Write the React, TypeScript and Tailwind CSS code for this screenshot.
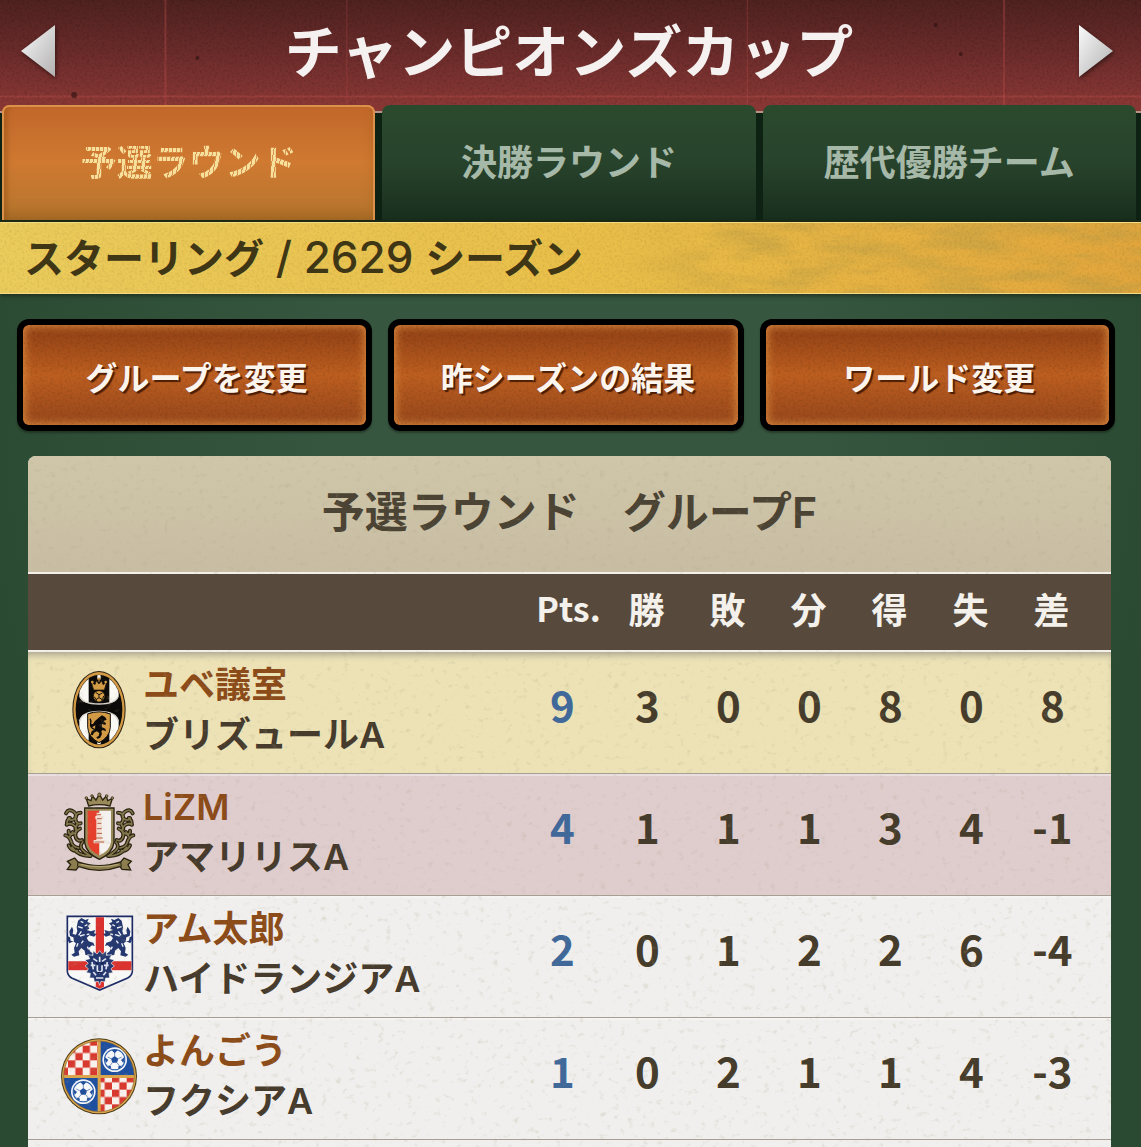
import type { ReactNode } from 'react'

const tabs = [
  { id: 'qualifying', label: '予選ラウンド' },
  { id: 'final', label: '決勝ラウンド' },
  { id: 'history', label: '歴代優勝チーム' },
]

const actions = ['グループを変更', '昨シーズンの結果', 'ワールド変更']

const columns = ['勝', '敗', '分', '得', '失', '差']

const teams = [
  { owner: 'ユベ議室', club: 'ブリズュールA', pts: 9, stats: [3, 0, 0, 8, 0, 8], bg: 'bg-[#ece2b6]', crest: <JuveCrest /> },
  { owner: 'LiZM', club: 'アマリリスA', pts: 4, stats: [1, 1, 1, 3, 4, -1], bg: 'bg-[#dfcdce]', crest: <TowerCrest /> },
  { owner: 'アム太郎', club: 'ハイドランジアA', pts: 2, stats: [0, 1, 2, 2, 6, -4], bg: 'bg-[#f0efed]', crest: <LionsCrest /> },
  { owner: 'よんごう', club: 'フクシアA', pts: 1, stats: [0, 2, 1, 1, 4, -3], bg: 'bg-[#f0efed]', crest: <CheckerCrest /> },
]

function Crest({ children }: { children: ReactNode }) {
  return (
    <svg viewBox="27 30 240 240" className="h-20 w-20 shrink-0" aria-hidden="true">
      {children}
    </svg>
  )
}

function JuveCrest() {
  return (
    <Crest>
      <clipPath id="juve-oval">
        <ellipse cx="147" cy="149" rx="69" ry="104" />
      </clipPath>
      <ellipse cx="147" cy="149" rx="80" ry="116" fill="#2a2013" />
      <ellipse cx="147" cy="149" rx="77" ry="113" fill="#d39a45" />
      <ellipse cx="147" cy="149" rx="70" ry="105" fill="#0c0a08" />
      <g clipPath="url(#juve-oval)">
        <g fill="#fbf9f4">
          <path d="M88 40h28v90q-22-4-28-24z" />
          <path d="M206 40h-28v90q22-4 28-24z" />
          <path d="M142 40h10v16h-10zM142 238h10v20h-10z" />
          <path d="M88 260h28V160q-22 2-28 22z" />
          <path d="M206 260h-28V160q22 2 28 22z" />
        </g>
        <path d="M89 108q8 24 58 24t58-24M89 184q6-30 58-30t58 30" fill="none" stroke="#d8d4cb" strokeWidth="4" />
      </g>
      <path d="M131 90l-7-24 11 8 4-12 8 10 8-10 4 12 11-8-7 24z" fill="#d39a45" stroke="#14100a" strokeWidth="2" />
      <path d="M147 52v14M141 57h12M135 84h24" stroke="#d39a45" strokeWidth="3" />
      <circle cx="127" cy="66" r="4" fill="#d39a45" />
      <circle cx="167" cy="66" r="4" fill="#d39a45" />
      <circle cx="147" cy="109" r="17" fill="#d9a14a" stroke="#14100a" strokeWidth="2" />
      <path d="M138 98l9 6 10-5M147 104v9l-9 6M147 113l10 6M133 110l5 9 2 6M161 108l-4 11-2 5" fill="none" stroke="#14100a" strokeWidth="3" />
      <path d="M113 162q34-13 68 0v40q-2 30-34 46-32-16-34-46z" fill="#d39a45" stroke="#14100a" strokeWidth="3" />
      <path
        d="M148 172l8-6 10 6 4 7-10 4 8 7-2 5-10-3 0 10 10 4 2 8-10-4-4 4 2 8-6 12-8 2-3-4 7-4 2-9-8-5-8 4-4 8-6-2 3-10 10-8 1-10-9 5-7-3 1-5 8-1 6-9z"
        fill="#0c0a08"
      />
      <path d="M134 208q-14-4-12-18 2-8-2-14" fill="none" stroke="#0c0a08" strokeWidth="4" />
    </Crest>
  )
}

function Foliage() {
  return (
    <>
      <g fill="none" stroke="#28220f" strokeWidth="12" strokeLinecap="round">
        <path d="M48 94q8-16 24-4 14 12 0 22-12 6-16-4M92 92q-16 0-16 18 2 18 16 14M50 128q14-8 26 6 8 16-8 22-14 2-12-10M90 140q-20 8-12 28 6 12 18 6M46 160q12 2 18 20 2 14 22 18M56 190q8 18 26 16M98 180q-14 16 6 30 8 6 18 12M66 196q20 26 52 26M60 108q-12 8-8 20M82 126l-6 14M68 150l-8 12" />
      </g>
      <g fill="none" stroke="#82764c" strokeWidth="5" strokeLinecap="round">
        <path d="M48 94q8-16 24-4 14 12 0 22-12 6-16-4M92 92q-16 0-16 18 2 18 16 14M50 128q14-8 26 6 8 16-8 22-14 2-12-10M90 140q-20 8-12 28 6 12 18 6M46 160q12 2 18 20 2 14 22 18M56 190q8 18 26 16M98 180q-14 16 6 30 8 6 18 12M66 196q20 26 52 26M60 108q-12 8-8 20M82 126l-6 14M68 150l-8 12" />
      </g>
    </>
  )
}

function TowerCrest() {
  return (
    <Crest>
      <Foliage />
      <g transform="translate(296 0) scale(-1 1)">
        <Foliage />
      </g>
      <path d="M116 72l-7-22 14 6 4-14 11 12 10-18 10 18 11-12 4 14 14-6-7 22q-32-8-64 0z" fill="#9b8a59" stroke="#28220f" strokeWidth="4" />
      <g fill="#9b8a59" stroke="#28220f" strokeWidth="2">
        <circle cx="109" cy="48" r="4" />
        <circle cx="126" cy="42" r="4" />
        <circle cx="148" cy="38" r="5" />
        <circle cx="170" cy="42" r="4" />
        <circle cx="187" cy="48" r="4" />
      </g>
      <path d="M104 78h88v104q-4 32-44 50-40-18-44-50z" fill="#9b8a59" stroke="#28220f" strokeWidth="4" />
      <path d="M113 86h35v134q-32-14-35-40z" fill="#e5402c" />
      <path d="M183 86h-35v134q32-14 35-40z" fill="#f4f1ee" />
      <path d="M140 92h14v10h4v10h-3v62h8v10h-32v-10h8v-62h-3v-10h4z" fill="#f4dfd2" />
      <path d="M141 98h12M141 110h14M142 124h12M141 140h14M140 154h16M138 168h20M134 180h28" stroke="#b0614b" strokeWidth="3" />
      <path d="M52 238l22-10 10 12q62 22 128 0l10-12 22 10-10 10 8 16-26-2-6-8q-62 22-124 0l-8 10-26-2 10-14z" fill="#8c7d4f" stroke="#28220f" strokeWidth="4" />
      <path d="M84 240l-2 14M212 240l2 14" stroke="#28220f" strokeWidth="3" />
      <path d="M92 247q56 14 112 0" fill="none" stroke="#b3a474" strokeWidth="4" />
    </Crest>
  )
}

function RampantLion() {
  return (
    <>
      <path
        d="M84 50l10-8 12 6 10-4-4 10 10 4-8 8 4 8-8 4 12 4 14-4-4 10 8 2-8 8-14-4-8 8 6 10 14 4 4 10-8-2-10 8 4 10 10 8-10 6-14-4-2-12-10-8-8 10 2 12-16 4-8-6 10-6-2-14 6-14-8-6-12 6-4-8-2-14 8 4 2 10 10 2-2-12-10-4-2-14 8-14 4 10-2 12 10 2 4-10-2-12z"
        fill="#25386f"
      />
      <path d="M92 52l8 4M84 68l14 4M94 82l-8 12M104 92l-14 4M100 110l-6 8M112 62l-8 4M72 74l4 12M118 90l-8 2M84 118l-4 10M112 128l4 8" stroke="#eef1f8" strokeWidth="4" />
    </>
  )
}

function LionsCrest() {
  return (
    <Crest>
      <path d="M52 37h195v163q0 14-14 22l-84 36-84-36q-13-8-13-22z" fill="#f8f8f6" stroke="#1c2b66" strokeWidth="5" />
      <path d="M137 40h25v208l-13 6-12-6zM55 170h189v30H55z" fill="#d9322f" />
      <path d="M134 40v130H55M165 40v130h79M55 201h79v44M244 201h-79v44" fill="none" stroke="#f8f8f6" strokeWidth="4" />
      <RampantLion />
      <g transform="translate(299 0) scale(-1 1)">
        <RampantLion />
      </g>
      <path
        d="M149 140l8 10 12-10 0 14 16-2-6 12 14 4-10 10 10 8-10 8 6 12-12 2 2 14-12 0-2 12-12-2-4 12-4-12-12 2-2-12-12 0 2-14-12-2 6-12-10-8 10-8-10-10 14-4-6-12 16 2 0-14 12 10z"
        fill="#25386f"
        stroke="#f8f8f6"
        strokeWidth="2"
      />
      <path d="M130 164l12 8M168 164l-12 8M149 158v16M122 184l14 0M176 184l-14 0M142 184v16l7 6 7-6v-16M130 204l8 10M168 204l-8 10M138 222h22M126 174l4 22M172 174l-4 22" fill="none" stroke="#dfe4ef" strokeWidth="5" />
      <path d="M137 176l8 4M161 176l-8 4M143 206h12" stroke="#101c48" strokeWidth="4" />
    </Crest>
  )
}

function Football({ x, y }: { x: number; y: number }) {
  return (
    <g transform={`translate(${x} ${y})`}>
      <circle r="37" fill="#f4f6fa" />
      <circle r="32" fill="#2257a8" />
      <circle r="29" fill="#f7f8fa" />
      <path d="M0-11l11 8-4 12H-7l-4-12z" fill="#214f9c" />
      <path d="M0-11v-10M11-3l10-5M7 9l7 9M-7 9l-7 9M-11-3l-10-5" stroke="#7790bf" strokeWidth="3" />
      <path d="M-9-28Q0-31 9-28L0-19zM29-7q1 9-3 17l-7-9zM-29-7q-1 9 3 17l7-9zM10 27q6-2 12-9l-10 0zM-10 27q-6-2-12-9l10 0z" fill="#214f9c" />
    </g>
  )
}

function CheckerCrest() {
  return (
    <Crest>
      <defs>
        <clipPath id="checker-disc">
          <circle cx="147" cy="151" r="106" />
        </clipPath>
        <pattern id="checker" width="44" height="44" patternUnits="userSpaceOnUse" x="10" y="15">
          <rect width="44" height="44" fill="#f9f1ec" />
          <path d="M0 0h22v22H0zM22 22h22v22H22z" fill="#d8392e" />
        </pattern>
      </defs>
      <circle cx="147" cy="151" r="114" fill="#4d3b17" />
      <circle cx="147" cy="151" r="111" fill="#dba54c" />
      <g clipPath="url(#checker-disc)">
        <path d="M40 44h103v103H40zM152 156h103v103H152z" fill="url(#checker)" />
        <path d="M152 44h103v103H152zM40 156h103v103H40z" fill="#1f4f9f" />
        <Football x={194} y={101} />
        <Football x={100} y={197} />
      </g>
      <circle cx="147" cy="151" r="106" fill="none" stroke="#84632a" strokeWidth="2" />
    </Crest>
  )
}

function Filters() {
  return (
    <svg className="absolute h-0 w-0" aria-hidden="true">
      <filter id="grain" x="0" y="0" width="100%" height="100%">
        <feTurbulence type="fractalNoise" baseFrequency="0.4" numOctaves="3" seed="4" />
        <feColorMatrix values="0 0 0 0 0  0 0 0 0 0  0 0 0 0 0  1.6 0 0 0 -0.7" />
      </filter>
      <filter id="specks" x="0" y="0" width="100%" height="100%">
        <feTurbulence type="fractalNoise" baseFrequency="0.14 0.18" numOctaves="3" seed="9" />
        <feColorMatrix values="0 0 0 0 0.4  0 0 0 0 0.35  0 0 0 0 0.22  3.5 0 0 0 -2.15" />
      </filter>
      <filter id="stains" x="0" y="0" width="100%" height="100%">
        <feTurbulence type="fractalNoise" baseFrequency="0.014 0.06" numOctaves="6" seed="12" />
        <feColorMatrix values="0 0 0 0 0.5  0 0 0 0 0.34  0 0 0 0 0.06  2.6 0 0 0 -0.95" />
      </filter>
    </svg>
  )
}

function Texture({ name, className }: { name: string; className: string }) {
  return (
    <svg className={`pointer-events-none absolute inset-0 h-full w-full ${className}`} aria-hidden="true">
      <rect width="100%" height="100%" filter={`url(#${name})`} />
    </svg>
  )
}

function Arrow({ label, d }: { label: string; d: string }) {
  return (
    <button type="button" aria-label={label} className="relative">
      <svg viewBox="0 0 36 54" className="h-[54px] w-9 drop-shadow-[1px_2px_2px_rgba(0,0,0,0.5)]">
        <defs>
          <linearGradient id="silver" x1="0" y1="0" x2="1" y2="1">
            <stop offset="0" stopColor="#fafafa" />
            <stop offset="1" stopColor="#b2b0b0" />
          </linearGradient>
        </defs>
        <path d={d} fill="url(#silver)" />
      </svg>
    </button>
  )
}

export default function App() {
  return (
    <main className="flex min-h-screen flex-col bg-[radial-gradient(ellipse_at_50%_34%,#36563f_30%,#2b4a32_75%)] font-['Inter','Noto_Sans_CJK_JP',sans-serif] font-medium">
      <Filters />

      <header className="relative flex h-[105px] items-center justify-between bg-linear-to-b from-[#4f2220] via-[#6b2c2b] to-[#8a3835] pr-[27px] pb-1 pl-5">
        <svg className="pointer-events-none absolute inset-0 h-full w-full" aria-hidden="true">
          <g stroke="#c4504c" strokeOpacity="0.35">
            <path d="M0 96.5h4000" strokeWidth="2" />
            <line x1="14.5%" x2="14.5%" y1="0" y2="100%" strokeWidth="2" />
            <line x1="30.4%" x2="30.4%" y1="0" y2="100%" />
            <line x1="65.5%" x2="65.5%" y1="0" y2="100%" />
            <line x1="88%" x2="88%" y1="0" y2="100%" strokeWidth="2" />
          </g>
          <g fill="#2a1010" fillOpacity="0.6">
            <circle cx="6.5%" cy="95" r="3" />
            <circle cx="17.3%" cy="58" r="2" />
            <circle cx="84.2%" cy="54" r="2" />
            <circle cx="82%" cy="25" r="2" />
          </g>
        </svg>
        <Texture name="grain" className="opacity-20" />
        <Arrow label="前へ" d="M1 27L35 1v52z" />
        <h1 className="relative pt-1 pl-1 text-[57px] leading-none font-bold text-[#f4f1f0]">チャンピオンズカップ</h1>
        <Arrow label="次へ" d="M35 27L1 1v52z" />
      </header>

      <nav
        role="tablist"
        className="flex h-[117px] gap-[7px] border-b-2 border-[#1c2a14] bg-[linear-gradient(to_bottom,#883634_0_6px,#b59588_6px_8px,#0d2213_8px)] pr-[5px] pl-[2px] text-4xl font-bold"
      >
        {tabs.map((tab, i) =>
          i === 0 ? (
            <button
              key={tab.id}
              type="button"
              role="tab"
              aria-selected="true"
              className="flex-1 rounded-t-lg bg-linear-to-b from-[#c1672a] via-[#cf7931] to-[#b6762e] shadow-[inset_0_2px_0_#dc914a,inset_-2px_0_0_#dc914a,inset_2px_0_0_#dc914a,inset_0_-8px_12px_rgba(130,80,20,0.35),inset_6px_0_3px_rgba(150,80,20,0.3)]"
            >
              <span className="bg-[repeating-linear-gradient(100deg,#f7e09c_0_3px,#d9924a_3px_4px)] bg-clip-text text-transparent">{tab.label}</span>
            </button>
          ) : (
            <button
              key={tab.id}
              type="button"
              role="tab"
              aria-selected="false"
              className="flex-1 rounded-t-lg bg-linear-to-b from-[#2a4a2d] via-[#28432c] to-[#182e1d] text-[#a6b8a8]"
            >
              {tab.label}
            </button>
          ),
        )}
      </nav>

      <div className="relative h-[72px] border-y border-[#f4dc86] bg-linear-to-r from-[#ebcc5c] via-[#eac04a] to-[#e3a63c] shadow-[0_2px_4px_rgba(20,30,15,0.6)]">
        <Texture name="stains" className="opacity-50 [mask-image:linear-gradient(to_right,rgba(0,0,0,0.06)_54%,black_66%)]" />
        <Texture name="grain" className="opacity-10" />
        <p className="relative px-6 text-[40px] leading-[68px] font-semibold text-[#3e3615]">
          スターリング<span className="text-[44px] font-medium whitespace-pre"> / 2629 </span>シーズン
        </p>
      </div>

      <div className="flex gap-4 pt-[25px] pr-[26px] pb-[25px] pl-[17px]">
        {actions.map((label) => (
          <button
            key={label}
            type="button"
            className="relative h-28 flex-1 overflow-hidden rounded-xl border-[6px] border-black bg-linear-to-b from-[#8f3f15] via-[#bd5f20] to-[#96461b] pt-2 pl-1 text-[32px] font-bold text-[#fbf5ee] shadow-[0_2px_2px_rgba(0,0,0,0.3)]"
          >
            <span className="absolute inset-0 rounded-md shadow-[inset_0_0_9px_2px_#d9873c]" />
            <Texture name="grain" className="opacity-15" />
            <span className="relative [text-shadow:2px_2px_1px_rgba(50,15,0,0.8)]">{label}</span>
          </button>
        ))}
      </div>

      <section className="relative mr-[30px] ml-7 flex-1 overflow-hidden rounded-t-lg bg-[#f0efed]">
        <h2 className="h-[116px] bg-linear-to-b from-[#cfc6a9] to-[#c8bda3] text-center text-[43px] leading-[112px] font-semibold text-[#4b4333]">
          予選ラウンド　グループF
        </h2>
        <table className="w-full table-fixed border-collapse">
          <thead className="relative z-10">
            <tr className="h-[78px] border-y-2 border-[#f3f0ea] bg-[#574a3c] font-['Noto_Sans_CJK_JP',sans-serif] text-4xl text-[#f4f1ec]">
              <th scope="col" aria-label="チーム" />
              <th scope="col" className="w-[85px] pb-2 pl-3 text-[34px] font-bold">
                Pts.
              </th>
              {columns.map((name) => (
                <th key={name} scope="col" className="w-[81px] pb-2 pl-[2px] font-bold last:w-[101px] last:pr-5">
                  {name}
                </th>
              ))}
            </tr>
          </thead>
          <tbody>
            {teams.map((team) => (
              <tr
                key={team.owner}
                className={`h-[122px] border-b border-[#a89f94] shadow-[inset_0_4px_0_-1px_rgba(255,255,255,0.35)] first:shadow-[inset_0_7px_6px_-3px_rgba(90,90,100,0.45)] ${team.bg}`}
              >
                <th scope="row" className="pb-1 pl-[31px] text-left">
                  <div className="flex items-center gap-1">
                    {team.crest}
                    <div className="text-4xl leading-[50px] font-semibold whitespace-nowrap">
                      <p className="text-[#8c4c1a]">{team.owner}</p>
                      <p className="text-[#463b2c]">{team.club}</p>
                    </div>
                  </div>
                </th>
                <td className="pb-4 text-center font-['Noto_Sans_CJK_JP',sans-serif] text-[42px] leading-none font-bold text-[#40699a]">{team.pts}</td>
                {team.stats.map((value, i) => (
                  <td key={columns[i]} className="pb-4 pl-1 text-center font-['Noto_Sans_CJK_JP',sans-serif] text-[42px] leading-none font-bold text-[#463c2b] last:pr-5">
                    {value}
                  </td>
                ))}
              </tr>
            ))}
          </tbody>
        </table>
        <Texture name="specks" className="opacity-25" />
      </section>
    </main>
  )
}
